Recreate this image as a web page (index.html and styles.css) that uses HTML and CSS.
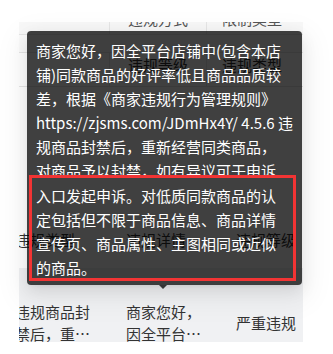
FILE: index.html
```html
<!DOCTYPE html>
<html lang="zh-CN">
<head>
<meta charset="utf-8">
<title>违规商品</title>
<link rel="stylesheet" href="styles.css">
</head>
<body>
<div class="page">
  <div class="table">
    <div class="row r1">
      <div class="c c1"><span></span></div>
      <div class="c c2"><span>违规方式</span></div>
      <div class="c c3"><span>限制类型</span></div>
    </div>
    <div class="row r2"></div>
    <div class="row r3">
      <div class="c c1"></div>
      <div class="c c2">违规等级</div>
      <div class="c c3">违规类型</div>
    </div>
    <div class="gap"></div>
    <div class="grid head">
      <div class="cell first">违规类型</div>
      <div class="cell">违规详情</div>
      <div class="cell">违规等级</div>
    </div>
    <div class="grid body">
      <div class="cell first"><span class="clamp">违规商品封禁后，重新经营同类商品</span></div>
      <div class="cell"><span class="clamp">商家您好，因全平台店铺中(包含本店铺)同款商品</span></div>
      <div class="cell">严重违规</div>
    </div>
  </div>

  <div class="tooltip">
    <div class="tip-top">商家您好，因全平台店铺中(包含本店<br>铺)同款商品的好评率低且商品品质较<br>差，根据《商家违规行为管理规则》<br>https://zjsms.com/JDmHx4Y/ 4.5.6 违<br>规商品封禁后，重新经营同类商品，<br>对商品予以封禁，如有异议可于申诉</div>
    <div class="mark">入口发起申诉。对低质同款商品的认<br>定包括但不限于商品信息、商品详情<br>宣传页、商品属性、主图相同或近似<br>的商品。</div>
    <span class="arrow"></span>
  </div>
</div>
</body>
</html>
```

FILE: styles.css
```css
html, body {
  margin: 0;
  padding: 0;
  background: #fff;
}

body {
  font-family: "Noto Sans CJK SC", "Noto Sans", sans-serif;
  font-size: 15px;
  color: #333;
}

.page {
  position: relative;
  width: 333px;
  height: 354px;
  padding: 22px 0 0 19px;
  box-sizing: border-box;
}

.table {
  width: 284px;
  height: 320px;
  overflow: hidden;
  background: #fff;
}

.row {
  display: flex;
  box-sizing: border-box;
}

.row .c {
  box-sizing: border-box;
  white-space: nowrap;
  overflow: hidden;
}

.c1 { width: 91px; border-right: 1px solid #e6e6e6; }
.c2 { width: 97px; border-right: 1px solid #e6e6e6; padding-left: 18px; }
.c3 { flex: 1; padding-left: 15px; }

.r1 {
  height: 13px;
  background: #f8f8f8;
  border-bottom: 1px solid #e6e6e6;
}

.r1 .c span {
  display: block;
  margin-top: -11px;
  line-height: 15px;
  color: #555;
}

.r2 {
  height: 18px;
  background: #fbfbfb;
  border-bottom: 1px solid #e6e6e6;
}

.r3 {
  height: 34px;
  line-height: 24px;
  border-bottom: 1px solid #e6e6e6;
}

.gap {
  height: 141px;
}

.grid {
  display: grid;
  grid-template-columns: 107px 110px 1fr;
}

.head {
  height: 40px;
  line-height: 24px;
  color: #333;
}

.body {
  height: 109px;
  background: #f0f1f3;
  align-items: center;
  line-height: 22px;
}

.cell {
  white-space: nowrap;
}

.cell.first {
  margin-left: -4px;
}

.clamp {
  display: -webkit-box;
  -webkit-box-orient: vertical;
  -webkit-line-clamp: 2;
  overflow: hidden;
  width: 78px;
  white-space: normal;
  word-break: break-all;
}

.tooltip {
  position: absolute;
  left: 27px;
  top: 31px;
  width: 275px;
  box-sizing: border-box;
  padding: 8px 9px 4px 9px;
  background: rgba(0, 0, 0, 0.75);
  border-radius: 4px;
  color: #fff;
  font-size: 15px;
  line-height: 24px;
  white-space: nowrap;
  box-shadow: 0 3px 6px -4px rgba(0, 0, 0, 0.12), 0 6px 16px 0 rgba(0, 0, 0, 0.08), 0 9px 28px 8px rgba(0, 0, 0, 0.05);
}

.tip-top {
  height: 136px;
  overflow: hidden;
}

.mark {
  box-sizing: border-box;
  width: 267px;
  height: 106px;
  margin-left: -7px;
  padding: 6px 0 0 4px;
  border: 3px solid #f23434;
}

.arrow {
  position: absolute;
  left: 132px;
  bottom: -4px;
  width: 0;
  height: 0;
  border-left: 4px solid transparent;
  border-right: 4px solid transparent;
  border-top: 4px solid rgba(0, 0, 0, 0.75);
}
```
